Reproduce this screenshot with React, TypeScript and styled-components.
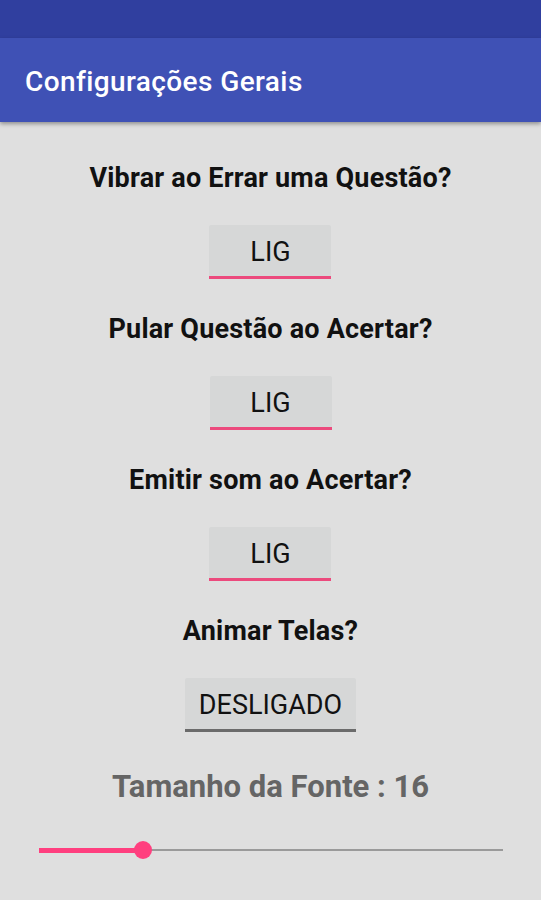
import React from "react";
import styled, { createGlobalStyle } from "styled-components";

const Global = createGlobalStyle`
  html, body { margin: 0; padding: 0; }
  body { background: #dfdfdf; font-family: Roboto, "Noto Sans", Arial, sans-serif; }
`;

const Screen = styled.div`
  width: 541px;
  height: 900px;
  background: #dfdfdf;
  display: flex;
  flex-direction: column;
  overflow: hidden;
`;

const StatusBar = styled.div`
  height: 38px;
  background: #303f9f;
`;

const AppBar = styled.header`
  height: 84px;
  background: #3f51b5;
  display: flex;
  align-items: center;
  padding-left: 25px;
  box-shadow: 0 2px 4px rgba(0, 0, 0, 0.35);
  position: relative;
  z-index: 1;
`;

const Title = styled.h1`
  margin: 0;
  font-size: 28px;
  font-weight: 500;
  color: #ffffff;
  letter-spacing: 0.4px;
  padding-top: 2px;
`;

const Content = styled.main`
  display: flex;
  flex-direction: column;
  align-items: center;
  padding-top: 41px;
`;

const Block = styled.section`
  display: flex;
  flex-direction: column;
  align-items: center;
  margin-bottom: 35px;
`;

const Question = styled.div`
  font-size: 27px;
  line-height: 30px;
  font-weight: 700;
  letter-spacing: 0.2px;
  color: #111111;
  white-space: nowrap;
`;

const Toggle = styled.button<{ $on: boolean }>`
  margin-top: 32px;
  min-width: 122px;
  height: 54px;
  padding: 2px 14px 0;
  border: none;
  border-radius: 2px 2px 0 0;
  background: #d6d7d7;
  border-bottom: 3px solid ${(p) => (p.$on ? "#ec4a7d" : "#6b6b6b")};
  font-family: Roboto, "Noto Sans", Arial, sans-serif;
  font-size: 27px;
  font-weight: 400;
  color: #111111;
  display: flex;
  align-items: center;
  justify-content: center;
`;

const FontLabel = styled.div`
  font-size: 31px;
  line-height: 36px;
  font-weight: 700;
  color: #656565;
  margin-top: 2px;
  white-space: nowrap;
`;

const SliderRow = styled.div`
  align-self: stretch;
  padding: 0 38px 0 39px;
  margin-top: 35px;
  height: 20px;
  display: flex;
  align-items: center;
`;

const Track = styled.div`
  position: relative;
  flex: 1;
  height: 2px;
  background: #9a9a9a;
`;

const Fill = styled.div`
  position: absolute;
  left: 0;
  top: -1px;
  height: 5px;
  background: #ff3f7f;
`;

const Thumb = styled.div`
  position: absolute;
  top: 50%;
  width: 18px;
  height: 18px;
  border-radius: 50%;
  background: #ff3f7f;
  transform: translate(-50%, -50%);
`;

const items = [
  { q: "Vibrar ao Errar uma Questão?", on: true },
  { q: "Pular Questão ao Acertar?", on: true },
  { q: "Emitir som ao Acertar?", on: true },
  { q: "Animar Telas?", on: false },
];

export default function App() {
  const pct = ((143 - 39) / (503 - 39)) * 100;
  return (
    <>
      <Global />
      <Screen>
        <StatusBar />
        <AppBar>
          <Title>Configurações Gerais</Title>
        </AppBar>
        <Content>
          {items.map((it) => (
            <Block key={it.q}>
              <Question>{it.q}</Question>
              <Toggle $on={it.on}>{it.on ? "LIG" : "DESLIGADO"}</Toggle>
            </Block>
          ))}
          <FontLabel>Tamanho da Fonte : 16</FontLabel>
          <SliderRow>
            <Track>
              <Fill style={{ width: `${pct}%` }} />
              <Thumb style={{ left: `${pct}%` }} />
            </Track>
          </SliderRow>
        </Content>
      </Screen>
    </>
  );
}
